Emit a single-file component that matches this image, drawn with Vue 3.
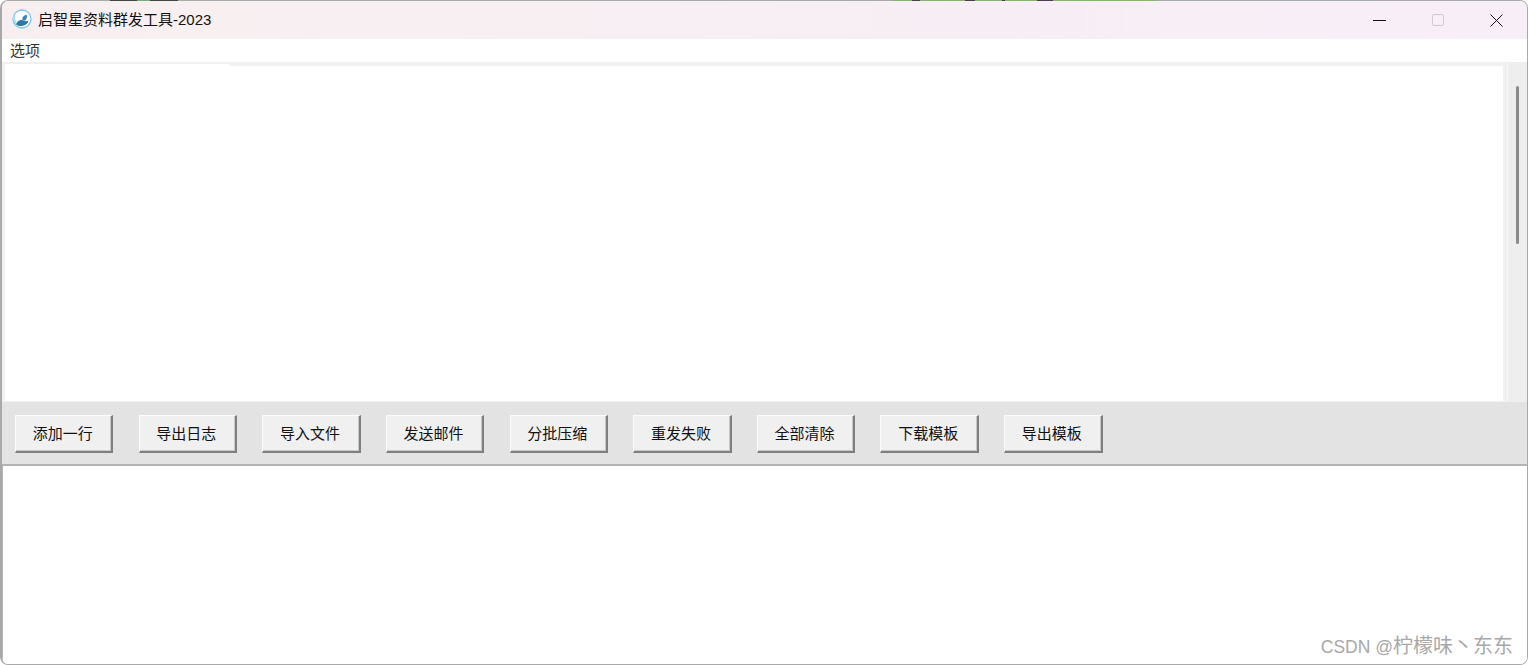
<script setup>
const buttons = ['添加一行', '导出日志', '导入文件', '发送邮件', '分批压缩', '重发失败', '全部清除', '下载模板', '导出模板']
</script>

<template>
  <div class="page">
    <div class="window">
      <div class="titlebar">
        <svg class="logo" width="20" height="20" viewBox="0 0 20 20">
          <circle cx="10" cy="10" r="9" fill="#fff" stroke="#79c6ef" stroke-width="1.3" />
          <path d="M2.6 6C1.6 9.5 2.6 13.5 5 16" fill="none" stroke="#a5ddf8" stroke-width="2" />
          <path d="M14.8 5.8c-2.8.2-4.6 2-4.6 5 .9.8 2.6.9 3.6.1 1.1-1.3 1.5-3.3 1-5.1z" fill="#3a86b5" />
          <path d="M4.2 15.4c.6-2.6 2.8-4.6 5.6-4.4 1.9.2 3 1.3 4.4 1.2.8 0 1.5-.2 2.2-.6-.2 2.4-2.2 4.8-5.4 5.2-2.6.3-5.2-.1-6.8-1.4z" fill="#2b79a8" />
        </svg>
        <span class="title">启智星资料群发工具-2023</span>
        <div class="controls">
          <div class="ctl">
            <svg width="13" height="13" viewBox="0 0 13 13"><path d="M0 6.5H13" stroke="#111" stroke-width="1" /></svg>
          </div>
          <div class="ctl">
            <svg width="12" height="12" viewBox="0 0 12 12"><rect x=".5" y=".5" width="11" height="11" rx="1.5" fill="none" stroke="#cfcbd0" /></svg>
          </div>
          <div class="ctl">
            <svg width="13" height="13" viewBox="0 0 13 13"><path d="M.5.5L12.5 12.5M12.5.5L.5 12.5" stroke="#111" stroke-width="1" /></svg>
          </div>
        </div>
      </div>

      <div class="menubar"><span class="menu-item">选项</span></div>

      <div class="table-area">
        <div class="table">
          <div class="table-head"></div>
        </div>
        <div class="scrollbar"><div class="thumb"></div></div>
      </div>

      <div class="toolbar">
        <button v-for="b in buttons" :key="b" class="btn">{{ b }}</button>
      </div>

      <div class="log"></div>

      <div class="watermark"><span class="wm-latin">CSDN @</span>柠檬味丶东东</div>
    </div>
    <!-- desktop showing through above the window's top edge -->
    <div class="desktop-strip left"></div>
    <div class="desktop-strip right"></div>
  </div>
</template>

<style scoped>
.page {
  position: relative;
}

.window {
  position: relative;
  height: 665px;
  box-sizing: border-box;
  display: flex;
  flex-direction: column;
  background: #fff;
  border: 1px solid #a9a9a9;
  border-left-width: 2px;
  border-radius: 8px;
  overflow: hidden;
  font-family: "Liberation Sans", "Noto Sans CJK SC", sans-serif;
  color: #111;
}

.titlebar {
  height: 38px;
  flex: none;
  display: flex;
  align-items: center;
  padding-left: 10px;
  background: linear-gradient(to right, #f7efef, #f7eef8);
}

.logo {
  flex: none;
  margin-bottom: 2px;
}

.title {
  margin-left: 6px;
  padding-bottom: 4px;
  font-size: 15px;
  color: #111;
}

.controls {
  margin-left: auto;
  display: flex;
  padding-right: 1px;
}

.ctl {
  width: 58.5px;
  height: 38px;
  display: flex;
  align-items: center;
  justify-content: center;
}

.menubar {
  height: 23px;
  flex: none;
  display: flex;
  align-items: center;
  padding-left: 8px;
  padding-bottom: 2px;
  box-sizing: border-box;
  background: #fff;
}

.menu-item {
  font-size: 15px;
  color: #333;
}

.table-area {
  height: 340px;
  flex: none;
  display: flex;
  background: #f0f0f0;
}

.table {
  position: relative;
  flex: 1;
  margin: 4px 4px 1px 3px;
  background: #fff;
}

.table-head {
  position: absolute;
  top: -2px;
  left: 0;
  width: 225px;
  height: 2px;
  background: #fff;
}

.scrollbar {
  width: 19px;
  flex: none;
  border-left: 1px solid #f7f7f7;
  background: #eeeeee;
  display: flex;
  justify-content: center;
}

.thumb {
  width: 3px;
  height: 158px;
  margin-top: 24px;
  border-radius: 2px;
  background: #8a8a8a;
}

.toolbar {
  height: 64px;
  flex: none;
  box-sizing: border-box;
  display: flex;
  align-items: center;
  gap: 25.25px;
  padding: 2px 0 0 13px;
  background: #e3e3e3;
  border-bottom: 2px solid #b4b4b4;
}

.btn {
  width: 98.4px;
  height: 38px;
  box-sizing: border-box;
  padding: 0 2px 3px 0;
  font-family: inherit;
  font-size: 15px;
  color: #111;
  background: #f0f0f0;
  border-style: solid;
  border-width: 1px 2px 2px 1px;
  border-color: #fbfbfb #7f7f7f #7f7f7f #fbfbfb;
  box-shadow: inset -1px -1px 0 #c8c8c8;
}

.log {
  flex: 1;
  background: #fff;
  border-left: 1px solid #b4b4b4;
}

.watermark {
  position: absolute;
  right: 14px;
  bottom: 5px;
  font-size: 20px;
  color: #a8a8a8;
}

.wm-latin {
  font-size: 17.5px;
}

.desktop-strip {
  position: absolute;
  top: 0;
  height: 1px;
}

.desktop-strip.left {
  left: 110px;
  width: 68px;
  background: linear-gradient(to right, #444 0 27px, #6fae73 27px 40px, #444 40px);
}

.desktop-strip.right {
  left: 891px;
  width: 266px;
  background: linear-gradient(to right, #84b46f 0 21px, #4a3f4a 21px 29px, #84b46f 29px 74px, #4a3f4a 74px 84px, #84b46f 84px 111px, #4a3f4a 111px 114px, #84b46f 114px 146px, #4a3f4a 146px 162px, #84b46f 162px);
}
</style>
